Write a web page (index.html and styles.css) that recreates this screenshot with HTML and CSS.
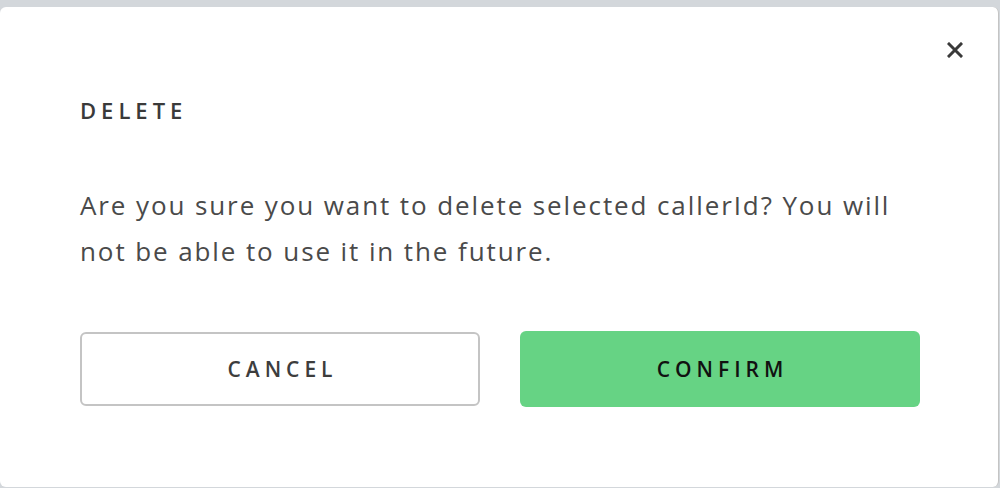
FILE: index.html
```html
<!DOCTYPE html>
<html>
<head>
<meta charset="utf-8">
<link rel="stylesheet" href="styles.css">
</head>
<body>
<div class="backdrop">
  <div class="modal">
    <button class="close" aria-label="Close">
      <svg width="16" height="16" viewBox="0 0 16 16"><path d="M2 2L14 14M14 2L2 14" stroke="#3a3a3a" stroke-width="3" stroke-linecap="square"/></svg>
    </button>
    <h2 class="title">DELETE</h2>
    <p class="message">Are you sure you want to delete selected callerId? You will not be able to use it in the future.</p>
    <div class="actions">
      <button class="btn btn-cancel">CANCEL</button>
      <button class="btn btn-confirm">CONFIRM</button>
    </div>
  </div>
</div>
</body>
</html>
```
FILE: styles.css
```css
html, body {
  margin: 0;
  padding: 0;
  background: #d3d7db;
  height: 100%;
  overflow: hidden;
}
.backdrop {
  padding-top: 7px;
}
.modal {
  position: relative;
  box-sizing: border-box;
  width: 999px;
  height: 480px;
  background: #fff;
  border-radius: 6px;
  border-right: 1px solid #c4c4c4;
  padding: 88px 80px 0 80px;
  font-family: "Open Sans", "Noto Sans", sans-serif;
  color: #3d3d3d;
}
.close {
  position: absolute;
  top: 35px;
  right: 35px;
  width: 16px;
  height: 16px;
  padding: 0;
  border: 0;
  background: none;
  display: flex;
}
.title {
  margin: 0;
  font-size: 22px;
  font-weight: 600;
  letter-spacing: 5px;
  line-height: 30px;
  color: #3a3a3a;
}
.message {
  margin: 57px 0 0 0;
  font-size: 26px;
  line-height: 46px;
  letter-spacing: 1.9px;
  color: #4a4a4a;
  max-width: 830px;
}
.actions {
  display: flex;
  align-items: center;
  gap: 40px;
  margin-top: 57px;
}
.btn {
  flex: 0 0 400px;
  height: 76px;
  box-sizing: border-box;
  border-radius: 6px;
  font-family: "Open Sans", "Noto Sans", sans-serif;
  font-size: 21px;
  font-weight: 600;
  letter-spacing: 5px;
  padding: 0 0 0 5px;
  cursor: pointer;
}
.btn-cancel {
  background: #fff;
  border: 2px solid #c4c4c4;
  color: #3d3d3d;
  height: 74px;
}
.btn-confirm {
  background: #66d384;
  border: 0;
  color: #111;
}
```
